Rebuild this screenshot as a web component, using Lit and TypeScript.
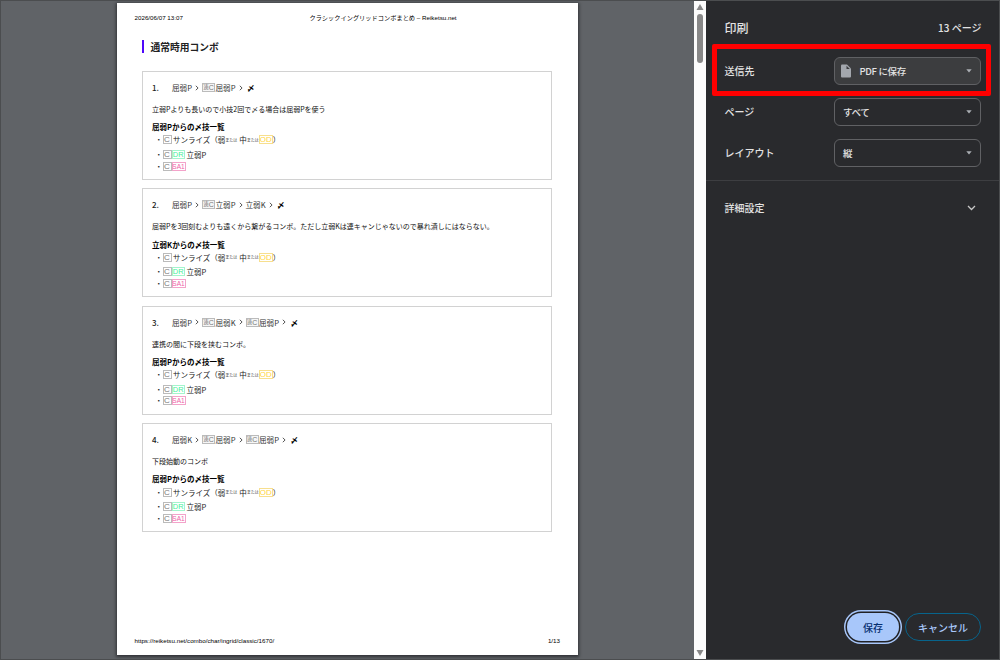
import { LitElement, html, css } from "lit";
import { customElement, property } from "lit/decorators.js";

type Step = { cancel?: boolean; move: string };
type Combo = { steps: Step[]; note: string; from: string };

const COMBOS: Combo[] = [
  { steps: [{ move: "屈弱P" }, { cancel: true, move: "屈弱P" }], note: "立弱Pよりも長いので小技2回で〆る場合は屈弱Pを使う", from: "屈弱P" },
  { steps: [{ move: "屈弱P" }, { cancel: true, move: "立弱P" }, { move: "立弱K" }], note: "屈弱Pを3回刻むよりも遠くから繋がるコンボ。ただし立弱Kは連キャンじゃないので暴れ潰しにはならない。", from: "立弱K" },
  { steps: [{ move: "屈弱P" }, { cancel: true, move: "屈弱K" }, { cancel: true, move: "屈弱P" }], note: "連携の間に下段を挟むコンボ。", from: "屈弱P" },
  { steps: [{ move: "屈弱K" }, { cancel: true, move: "屈弱P" }, { cancel: true, move: "屈弱P" }], note: "下段始動のコンボ", from: "屈弱P" },
];

@customElement("combo-card")
class ComboCard extends LitElement {
  @property({ type: Number }) number = 1;
  @property({ attribute: false }) combo!: Combo;

  static styles = css`
    :host {
      display: block;
      box-sizing: border-box;
      height: 109px;
      border: 1.4px solid #d2d2d2;
      padding: 7px 9.5px 0;
      font-size: 7px;
      color: #111;
    }
    .line { display: flex; align-items: center; white-space: nowrap; }
    .route { height: 17px; font-size: 7.6px; color: #333; }
    .no { width: 20px; font-size: 8px; font-weight: 500; color: #222; }
    .move { width: 20px; }
    .sep { width: 10px; display: flex; justify-content: center; }
    .sep svg { width: 4px; height: 6px; }
    .finish { margin-left: 1.5px; font-weight: 700; color: #000; }
    .note { height: 25.5px; }
    .from { height: 10.5px; font-size: 7.5px; font-weight: 700; color: #000; }
    .ender { height: 13px; padding: 1.4px 0 0 4px; font-size: 7.5px; color: #222; }
    .ender.tight { height: 10.5px; padding-top: 0; }
    .dot { width: 6.5px; text-indent: -1px; flex: none; }
    .badge {
      display: flex;
      align-items: center;
      justify-content: center;
      box-sizing: border-box;
      height: 9px;
      border: 1px solid #bbb;
      font: 8px/7px "Liberation Sans", Arial, sans-serif;
      color: #777;
      flex: none;
    }
    .c { width: 9px; }
    .chain { width: 13px; margin-right: 0.5px; background: #f6f6f6; font-size: 7px; color: #777; }
    .kanji { font: 5.5px/7px "Noto Sans CJK JP", sans-serif; }
    .dr { width: 13.5px; color: #43f09b; border-color: #a4f5cd; font-size: 7.5px; }
    .sa { width: 14px; color: #ee5ca5; border-color: #f3a3ca; font-size: 6.5px; }
    .od { width: 14px; color: #ffd43c; border-color: #f7df8e; }
    .or { font-size: 4px; width: 12px; color: #444; }
    .name { margin-left: 1.5px; }
    .mid { margin-left: 2px; }
  `;

  private sep() {
    return html`<span class="sep"><svg viewBox="0 0 4 6" fill="none" stroke="#444" stroke-width="0.9"><path d="M0.8 0.8 3.1 3 0.8 5.2" /></svg></span>`;
  }

  render() {
    return html`
      <div class="line route">
        <span class="no">${this.number}.</span>
        ${this.combo.steps.map((s) => html`${s.cancel ? html`<span class="badge chain"><span class="kanji">連</span>C</span>` : ""}<span class="move">${s.move}</span>${this.sep()}`)}
        <span class="finish">〆</span>
      </div>
      <div class="line note">${this.combo.note}</div>
      <div class="line from">${this.combo.from}からの〆技一覧</div>
      <div class="line ender">
        <span class="dot">・</span><span class="badge c">C</span><span class="name">サンライズ（弱</span><span class="or">または</span>
        <span class="mid">中</span><span class="or">または</span><span class="badge od">OD</span><span>）</span>
      </div>
      <div class="line ender">
        <span class="dot">・</span><span class="badge c">C</span><span class="badge dr">DR</span><span class="name">立弱P</span>
      </div>
      <div class="line ender tight">
        <span class="dot">・</span><span class="badge c">C</span><span class="badge sa">SA1</span>
      </div>
    `;
  }
}

@customElement("app-root")
class AppRoot extends LitElement {
  static styles = css`
    :host {
      display: grid;
      grid-template-columns: 693px 12px 1fr;
      box-sizing: border-box;
      width: 1000px;
      height: 660px;
      border: 1px solid #4b4d4f;
      background: #292a2d;
      overflow: hidden;
      font-family: "Noto Sans CJK JP", sans-serif;
    }
    .preview { background: #606367; padding: 2px 0 0 116px; height: 656px; }
    .paper {
      display: flex;
      flex-direction: column;
      box-sizing: border-box;
      width: 461px;
      height: 652px;
      background: #fff;
      box-shadow: 0 1px 3px 1px #303236;
      padding: 8px 18px 9px 17.5px;
    }
    .running { display: flex; height: 12px; align-items: center; font: 6.22px "Liberation Sans", "Noto Sans CJK JP", sans-serif; color: #000; }
    .stamp { width: 175px; }
    .foot { justify-content: space-between; margin-top: auto; }
    .title { display: flex; align-items: center; height: 13px; margin: 17px 0 0 7.5px; border-left: 2.5px solid #4f08fa; padding-left: 6.5px; font-size: 9.75px; font-weight: 700; color: #222; }
    .cards { display: flex; flex-direction: column; gap: 8.4px; margin: 18px 8.5px 0 7px; }
    .scroll { display: flex; flex-direction: column; align-items: center; background: #fcfcfc; }
    .scroll svg { width: 8px; height: 6px; fill: #888; }
    .up { margin-top: 3px; }
    .thumb { width: 6px; height: 49px; margin-top: 4px; border-radius: 3px; background: #888; }
    .down { margin-top: auto; margin-bottom: 3px; }
    .panel { display: flex; flex-direction: column; color: #e3e3e3; font-size: 10px; font-weight: 500; min-width: 0; }
    .head { display: flex; justify-content: space-between; align-items: center; height: 44px; padding: 4px 17.5px 0 18.5px; }
    .head h1 { margin: 0; font-size: 12px; font-weight: 500; }
    .field { display: flex; justify-content: space-between; align-items: center; height: 41px; padding: 0 18px 0 18.5px; }
    .spot { box-sizing: border-box; height: 52px; margin: -5px 8px -5px 6px; padding: 1px 5px 0 7.5px; border: 5px solid #f00; border-radius: 2px; }
    .select { display: flex; align-items: center; box-sizing: border-box; width: 147px; height: 28px; border: 1px solid #606164; border-radius: 6px; padding: 0 8px; font-size: 9.5px; }
    .filled { background: #3c3d3f; padding-left: 5px; }
    .file { width: 12px; height: 14px; margin-right: 7.5px; }
    .caret { width: 6px; height: 4px; margin-left: auto; fill: #aaaeb3; }
    .latin { letter-spacing: -0.35px; }
    .tight { letter-spacing: -0.3px; }
    .more { display: flex; justify-content: space-between; align-items: center; height: 53px; border-top: 1px solid #3d3e41; padding: 0 23px 0 18.5px; margin-top: 7px; }
    .more svg { width: 9px; height: 6px; }
    .actions { display: flex; justify-content: flex-end; gap: 6px; margin: auto 18px 18px 0; }
    .btn { display: flex; align-items: center; justify-content: center; box-sizing: border-box; height: 28px; border-radius: 14px; }
    .save { width: 52px; background: #a8c7fa; color: #062e6f; box-shadow: 0 0 0 1.5px #202124, 0 0 0 3px #a8c7fa; }
    .cancel { width: 76px; border: 1px solid #07648c; color: #a8c7fa; }
  `;

  private caret() {
    return html`<svg class="caret" viewBox="0 0 6 4"><path d="M0.3 0.3h5.4L3 3.5z" /></svg>`;
  }
  private select(label: string) {
    return html`<div class="select"><span class="tight">${label}</span>${this.caret()}</div>`;
  }

  render() {
    return html`
      <main class="preview">
        <div class="paper">
          <div class="running"><span class="stamp">2026/06/07 13:07</span><span>クラシックイングリッドコンボまとめ – Reiketsu.net</span></div>
          <div class="title">通常時用コンボ</div>
          <div class="cards">${COMBOS.map((c, i) => html`<combo-card .number=${i + 1} .combo=${c}></combo-card>`)}</div>
          <div class="running foot"><span>https://reiketsu.net/combo/char/ingrid/classic/1670/</span><span>1/13</span></div>
        </div>
      </main>
      <div class="scroll">
        <svg class="up" viewBox="0 0 8 6"><path d="M4 0 7.5 6h-7z" /></svg>
        <div class="thumb"></div>
        <svg class="down" viewBox="0 0 8 6"><path d="M4 6 7.5 0h-7z" /></svg>
      </div>
      <aside class="panel">
        <div class="head"><h1>印刷</h1><span>13 ページ</span></div>
        <div class="field spot">
          <span>送信先</span>
          <div class="select filled">
            <svg class="file" viewBox="0 0 11 14"><path fill="#a3a7ad" d="M1.5 0.5H6.5L10.5 4.5V12.5Q10.5 13.5 9.5 13.5H1.5Q0.5 13.5 0.5 12.5V1.5Q0.5 0.5 1.5 0.5Z" /><path fill="#3c3d3f" d="M6 1.7V5h3.3z" /></svg>
            <span class="latin">PDF に保存</span>${this.caret()}
          </div>
        </div>
        <div class="field"><span>ページ</span>${this.select("すべて")}</div>
        <div class="field"><span>レイアウト</span>${this.select("縦")}</div>
        <div class="more"><span>詳細設定</span><svg viewBox="0 0 9 6" fill="none" stroke="#c7c7c7" stroke-width="1.3"><path d="M1 1 4.5 4.5 8 1" /></svg></div>
        <div class="actions"><div class="btn save">保存</div><div class="btn cancel">キャンセル</div></div>
      </aside>
    `;
  }
}
